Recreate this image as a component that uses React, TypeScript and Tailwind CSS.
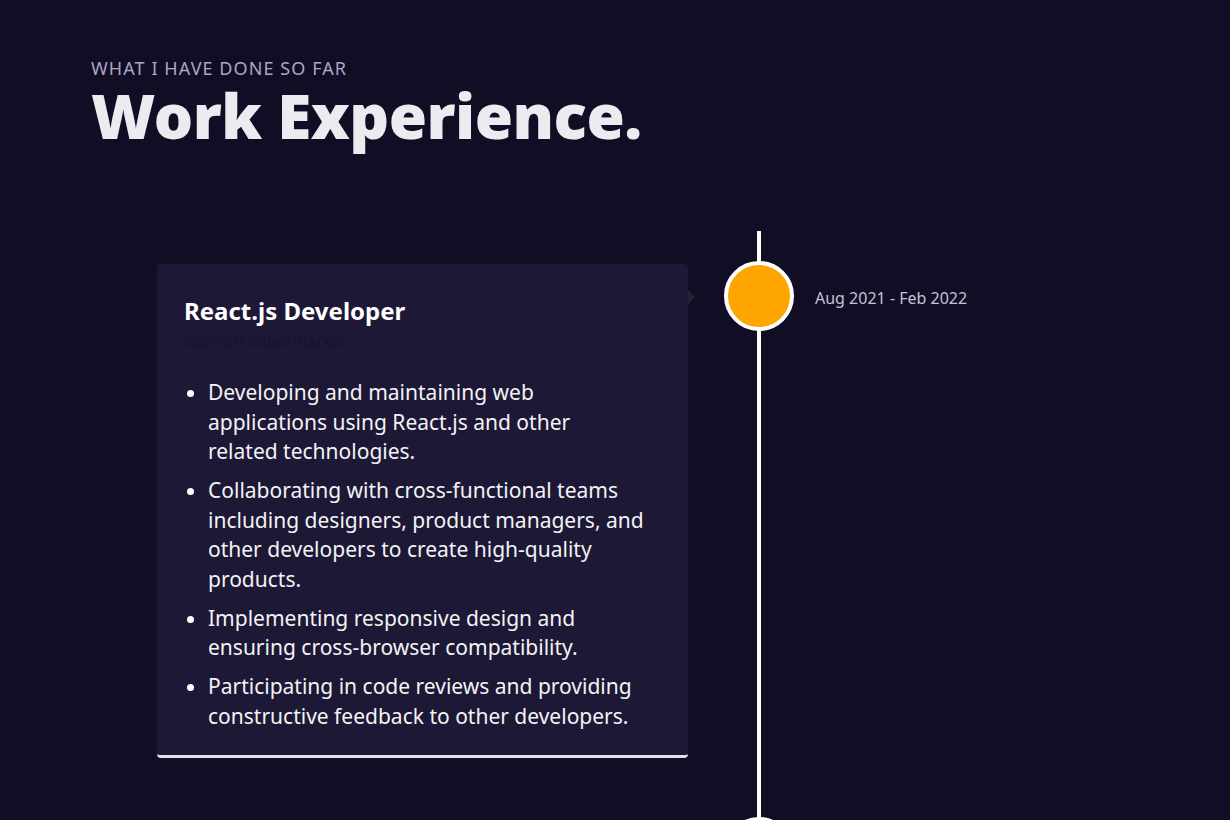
const points = [
  "Developing and maintaining web applications using React.js and other related technologies.",
  "Collaborating with cross-functional teams including designers, product managers, and other developers to create high-quality products.",
  "Implementing responsive design and ensuring cross-browser compatibility.",
  "Participating in code reviews and providing constructive feedback to other developers.",
];

function ExperienceCard() {
  return (
    <div className="relative w-[531px] mt-[33px] rounded-[4px] bg-[#1d1836] border-b-[3px] border-[#e3e3e3] pl-[27px] pr-[44px] pt-[30px] pb-[24px]">
      {/* arrow pointing at the timeline */}
      <div className="absolute right-[-7px] top-[26px] w-0 h-0 border-y-[7px] border-y-transparent border-l-[7px] border-l-[#232631]" />
      <h3 className="text-white text-[24px] font-bold leading-[34px]">React.js Developer</h3>
      <p className="text-[#17142c] text-[16px] leading-[24px] mt-[1px]">Galmart supermarket</p>
      <ul className="mt-[25px] ml-[5px] list-disc pl-[19px] space-y-[9.5px] marker:text-white">
        {points.map((point) => (
          <li key={point} className="text-[#f3f3f3] text-[21px] leading-[29.5px]">
            {point}
          </li>
        ))}
      </ul>
    </div>
  );
}

export default function App() {
  return (
    <div
      className="h-[820px] overflow-hidden bg-[#100d25]"
      style={{ fontFamily: '"Noto Sans", "Open Sans", sans-serif' }}
    >
      <section className="pl-[91px] pt-[60px]">
        <p className="text-[#aaa6c3] text-[18px] uppercase leading-[16px] tracking-[0.06em]">What I have done so far</p>
        <h2 className="mt-[7px] text-[#ebebf0] text-[62px] font-black leading-[64px] tracking-[-0.5px]">Work Experience.</h2>
      </section>

      <div className="flex items-start mt-[84px] pl-[157px]">
        <ExperienceCard />
        <div className="relative ml-[36px] w-[70px] flex justify-center">
          <div className="w-[4px] h-[700px] bg-white" />
          <div className="absolute top-[30px] left-0 w-[70px] h-[70px] rounded-full bg-[#ffa500] border-[4px] border-white" />
          <div className="absolute top-[586px] left-0 w-[70px] h-[70px] rounded-full bg-[#1d1836] border-[4px] border-white" />
        </div>
        <p className="ml-[21px] mt-[55px] text-[#c5c3d6] text-[16px] leading-[24px]">Aug 2021 - Feb 2022</p>
      </div>
    </div>
  );
}
